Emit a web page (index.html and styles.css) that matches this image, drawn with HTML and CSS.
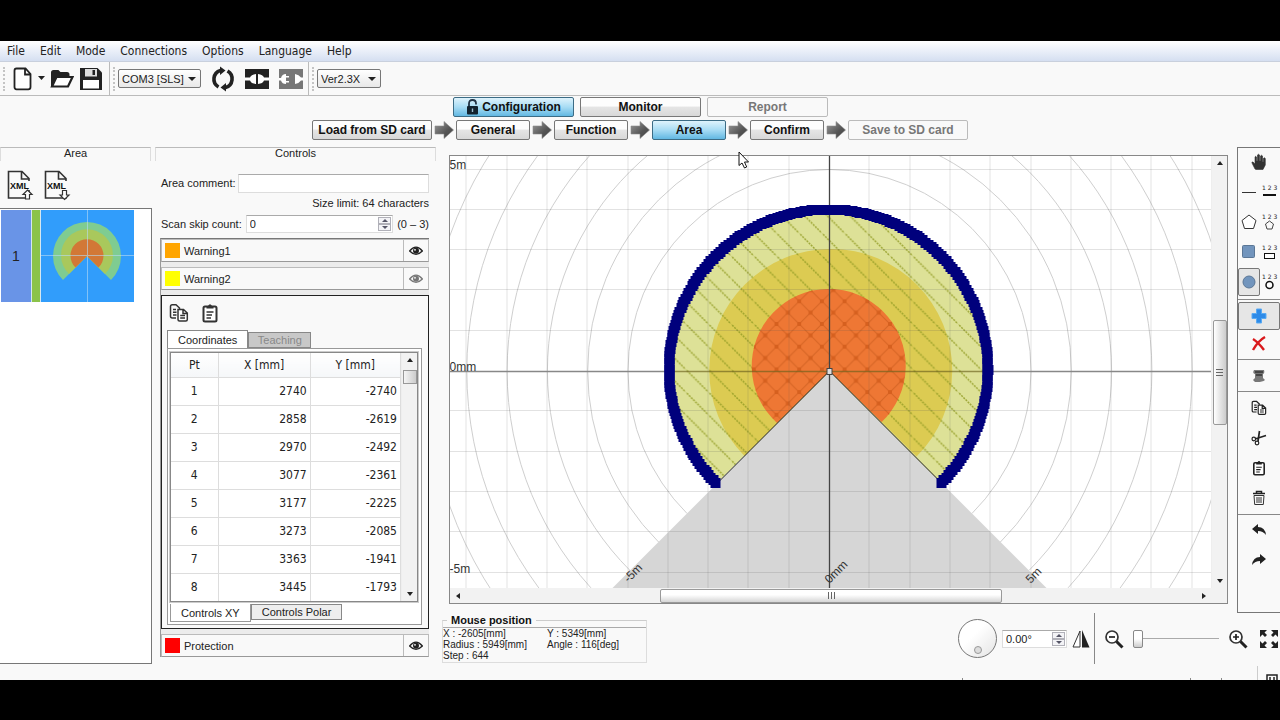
FILE: index.html
```html
<!DOCTYPE html>
<html lang="en">
<head>
<meta charset="utf-8">
<title>Area configuration</title>
<link rel="stylesheet" href="styles.css">
</head>
<body>
<svg class="defs" aria-hidden="true">
  <symbol id="eye" viewBox="0 0 14 10"><path d="M.6 5Q7-2.6 13.4 5 7 11.6.6 5Z" fill="none" stroke="currentColor" stroke-width="1.3"/><circle cx="7" cy="4.8" r="3" fill="currentColor"/><circle cx="6" cy="3.8" r=".9" fill="#fff"/></symbol>
  <symbol id="copy" viewBox="0 0 20 20"><path d="M7 15H3.2Q1.5 15 1.5 13.300V3.500Q1.500 1.800 3.200 1.800H7L10.500 5V6M4 6.500H7M4 9.200H7.500M4 12H7.500" fill="none" stroke="currentColor" stroke-width="1.500"/><path d="M9 6.500H14.500L18.300 10V16.500Q18.300 18 16.800 18H10.500Q9 18 9 16.500ZM14 7V10.500H18M11.200 12.500H16M11.200 15H16" fill="#fff" stroke="currentColor" stroke-width="1.500"/></symbol>
  <symbol id="clip" viewBox="0 0 20 20"><rect x="3.500" y="3.500" width="13" height="15" rx="1.500" fill="#fff" stroke="currentColor" stroke-width="2"/><path d="M6.500 5.500V3H8Q10-.5 12 3H13.500V5.500Z" fill="currentColor"/><path d="M6.500 9H13.500M6.500 12H12M6.500 15H11" stroke="currentColor" stroke-width="1.400"/></symbol>
  <symbol id="arrow" viewBox="0 0 20 18"><path d="M1 5H10V.5L19.500 9 10 17.500V13H1Z" fill="url(#arrowFill)" stroke="#8a8a8a" stroke-width=".6"/></symbol>
  <symbol id="file" viewBox="0 0 28 32"><path d="M1.500 1.500H15L22 8.500V28H1.500ZM14.500 2V9H22" fill="#fafafa" stroke="#333" stroke-width="1.600"/><rect x="3" y="11" width="20" height="9" fill="#fafafa"/></symbol>
  <linearGradient id="arrowFill" x1="0" y1="0" x2="1" y2="1"><stop offset="0" stop-color="#999"/><stop offset=".6" stop-color="#555"/><stop offset="1" stop-color="#444"/></linearGradient>
</svg>
<div class="letterbox top"></div>
<div class="app">
  <nav class="menu" aria-label="Main menu">
    <button>File</button><button>Edit</button><button>Mode</button><button>Connections</button><button>Options</button><button>Language</button><button>Help</button>
  </nav>
  <div class="toolbar">
    <div class="group files">
      <button aria-label="New"><svg width="20" height="24" viewBox="0 0 20 24"><path d="M3.500 1.500H12.500L17.500 7V20Q17.500 22.300 15.300 22.300H3.500Q1.500 22.300 1.500 20V3.700Q1.500 1.500 3.500 1.500ZM12 2V7.500H17" fill="#fff" stroke="#222" stroke-width="1.800"/></svg></button>
      <button class="more" aria-label="New options"><svg width="7" height="5"><path d="M0 0H7L3.500 4Z" fill="#222"/></svg></button>
      <button aria-label="Open"><svg width="24" height="20" viewBox="0 0 24 20"><path d="M2 18V3.500Q2 2 3.500 2H8L10 4H17Q18.500 4 18.500 5.500V8" fill="#222" stroke="#222" stroke-width="2"/><path d="M2 17.500 6.500 8H22.500L18 17.500Z" fill="#fff" stroke="#222" stroke-width="2.200"/></svg></button>
      <button aria-label="Save"><svg width="24" height="24" viewBox="0 0 24 24"><path d="M1 1H18.500L23 5.500V23H1Z" fill="#222"/><path d="M6 2H18V9.500H6Z" fill="#ddd"/><path d="M13.500 3H16V8H13.500Z" fill="#222"/><path d="M4 13H20V21.500H4Z" fill="#fff"/></svg></button>
    </div>
    <div class="group conn">
      <span class="select port"><select aria-label="Port"><option>COM3 [SLS]</option></select></span>
      <button aria-label="Refresh"><svg width="24" height="26" viewBox="0 0 24 26"><path d="M7.500 21A9 9 0 0 1 9.500 4.500M16.500 5A9 9 0 0 1 14.500 21.500" fill="none" stroke="#222" stroke-width="3.600"/><path d="M9 .5 14.500 4.500 9 9ZM15 17 9.500 21.500 15 25.500Z" fill="#222"/></svg></button>
      <button aria-label="Connect"><svg width="24" height="20" viewBox="0 0 24 20"><path d="M0 0H24V20H0Z" fill="#222"/><path d="M0 8.500H5Q6 5.500 11 5V15Q6 14.500 5 11.500H0ZM24 8.500H19Q18 5.500 13 5V15Q18 14.500 19 11.500H24Z" fill="#fff"/></svg></button>
      <button aria-label="Disconnect" disabled><svg width="24" height="20" viewBox="0 0 24 20"><path d="M0 0H24V20H0Z" fill="#777"/><path d="M0 9H2Q3 5 7 5V7H10V8.500H7V12H10V13.500H7V15Q3 15 2 11.500H0ZM24 8.500H22Q20 5.500 16 5V15Q20 14.500 22 11.500H24Z" fill="#fff"/></svg></button>
    </div>
    <div class="group">
      <span class="select ver"><select aria-label="Version"><option>Ver2.3X</option></select></span>
    </div>
  </div>

  <div class="modes">
    <button class="btn wide active"><svg width="13" height="16" viewBox="0 0 13 16"><path d="M3 8V4.500Q3 1 6.500 1T10 4.500V5.500" fill="none" stroke="#234" stroke-width="1.800"/><rect x="1" y="7" width="11" height="8.500" rx="1" fill="#12222e"/><path d="M6.500 9.500V13" stroke="#9bc" stroke-width="1.400"/></svg>Configuration</button>
    <button class="btn wide">Monitor</button>
    <button class="btn wide" disabled>Report</button>
  </div>
  <div class="steps">
    <button class="btn sd">Load from SD card</button><svg class="arrow"><use href="#arrow"/></svg>
    <button class="btn">General</button><svg class="arrow"><use href="#arrow"/></svg>
    <button class="btn">Function</button><svg class="arrow"><use href="#arrow"/></svg>
    <button class="btn active">Area</button><svg class="arrow"><use href="#arrow"/></svg>
    <button class="btn">Confirm</button><svg class="arrow"><use href="#arrow"/></svg>
    <button class="btn sd" disabled>Save to SD card</button>
  </div>

  <main class="work">
    <section class="areas">
      <h2>Area</h2>
      <div class="xml">
        <button aria-label="Export XML"><svg width="28" height="32" viewBox="0 0 28 32"><use href="#file"/><text x="3" y="19" class="xmltext">XML</text><path d="M20.500 20 25 24.500H22.500V29H18.500V24.500H16Z" fill="#fff" stroke="#333" stroke-width="1.200"/></svg></button>
        <button aria-label="Import XML"><svg width="28" height="32" viewBox="0 0 28 32"><use href="#file"/><text x="3" y="19" class="xmltext">XML</text><path d="M20.500 29.500 25 25H22.500V20.500H18.500V25H16Z" fill="#fff" stroke="#333" stroke-width="1.200"/></svg></button>
      </div>
      <div class="list">
        <div class="item">
          <span class="num">1</span><span class="flag"></span>
          <svg class="thumb" viewBox="0 0 93 92"><rect width="93" height="92" fill="#319dfb"/><path d="M46 46 22 70A34 34 0 1 1 70 70Z" fill="#7fcc91"/><path d="M46 46 28 64A26 26 0 1 1 64 64Z" fill="#a9c85c"/><path d="M46 46 34.500 57.500A16.500 16.500 0 1 1 57.500 57.500Z" fill="#d27836"/><path d="M46.500 0V92M0 45.500H93" stroke="#b9dcf5" stroke-width="1" opacity=".6"/></svg>
        </div>
      </div>
    </section>

    <section class="controls">
      <h2>Controls</h2>
      <div class="body">
        <div class="field comment"><label for="comment">Area comment:</label><input id="comment" type="text"></div>
        <p class="limit">Size limit: 64 characters</p>
        <div class="field"><label for="skip">Scan skip count:</label><span class="spin"><input id="skip" type="text" value="0"><span class="arrows"><button aria-label="Increase skip"></button><button class="down" aria-label="Decrease skip"></button></span></span><span class="range">(0 – 3)</span></div>
        <div class="zones">
          <div class="zone"><i class="swatch orange"></i><span>Warning1</span><button aria-label="Show Warning1"><svg width="14" height="10"><use href="#eye"/></svg></button></div>
          <div class="zone"><i class="swatch yellow"></i><span>Warning2</span><button class="dim" aria-label="Show Warning2"><svg width="14" height="10"><use href="#eye"/></svg></button></div>
          <div class="detail">
            <div class="edit"><button aria-label="Copy"><svg width="20" height="20"><use href="#copy"/></svg></button><button aria-label="Paste"><svg width="20" height="20"><use href="#clip"/></svg></button></div>
            <div class="tabs"><button class="on">Coordinates</button><button disabled>Teaching</button></div>
            <div class="pane">
              <div class="frame">
                <table>
                  <thead><tr><th class="pt">Pt</th><th>X [mm]</th><th>Y [mm]</th></tr></thead>
                  <tbody>
                    <tr><td>1</td><td>2740</td><td>-2740</td></tr>
                    <tr><td>2</td><td>2858</td><td>-2619</td></tr>
                    <tr><td>3</td><td>2970</td><td>-2492</td></tr>
                    <tr><td>4</td><td>3077</td><td>-2361</td></tr>
                    <tr><td>5</td><td>3177</td><td>-2225</td></tr>
                    <tr><td>6</td><td>3273</td><td>-2085</td></tr>
                    <tr><td>7</td><td>3363</td><td>-1941</td></tr>
                    <tr><td>8</td><td>3445</td><td>-1793</td></tr>
                  </tbody>
                </table>
                <div class="vscroll table-scroll"><b class="tri up"></b><span class="thumbbar"></span><b class="tri dn"></b></div>
              </div>
              <div class="tabs bottom"><button class="on">Controls XY</button><button>Controls Polar</button></div>
            </div>
          </div>
          <div class="zone"><i class="swatch red"></i><span>Protection</span><button aria-label="Show Protection"><svg width="14" height="10"><use href="#eye"/></svg></button></div>
        </div>
      </div>
    </section>

    <section class="stage">
      <div class="upper">
        <div class="canvas">
          <div class="view">
            <svg class="plot" viewBox="450 156 762 432" preserveAspectRatio="xMidYMid slice" role="img" aria-label="Scan area plot">
              <defs>
                <pattern id="hatch" x="777" y="324" width="22.700" height="22.700" patternUnits="userSpaceOnUse"><path d="M-1-1 23.700 23.700" stroke="#929c24" stroke-width="1.500" stroke-dasharray="2 1" opacity=".85"/></pattern>
                <pattern id="cross" x="777" y="324" width="22.700" height="22.700" patternUnits="userSpaceOnUse"><path d="M0 0 22.700 22.700M22.700 0 0 22.700" stroke="#cf5f20" stroke-width="1.200" opacity=".75"/><path d="M9.400 9.400H13.400V13.400H9.400ZM0 0H2V2H0ZM20.700 0H22.700V2H20.700ZM0 20.700H2V22.700H0ZM20.700 20.700H22.700V22.700H20.700Z" fill="#d6601f"/></pattern>
              </defs>
              <rect x="0" y="0" width="1700" height="900" fill="#fff"/>
              <g id="rings" fill="none" stroke="#cfcfcf"></g>
              <path d="M830 371 530 671H1130Z" fill="#d6d6d6"/>
              <path d="M829.500 371 717 483.500A159 159 0 1 1 942 483.500Z" fill="#dde197"/>
              <path d="M830.500 371 745 456A121.500 121.500 0 1 1 917 456.500Z" fill="#dccb52"/>
              <path d="M829.500 371 717 483.500A159 159 0 1 1 942 483.500Z" fill="url(#hatch)"/>
              <path d="M830 371 777.500 423A77 77 0 1 1 882 422Z" fill="#ee7734"/>
              <path d="M830 371 777.500 423A77 77 0 1 1 882 422Z" fill="url(#cross)"/>
              <g id="grid" stroke="#555" stroke-opacity=".17"></g>
              <path d="M0 371.500H668M992 371.500H1700" stroke="#888" stroke-width="1.500"/>
              <path d="M668 371.500H992" stroke="#6b611d" stroke-width="1.500" opacity=".65"/>
              <path d="M830 0V900" stroke="#444" stroke-width="1.300"/>
              <path d="M717 484 830 371 942 483" fill="none" stroke="#222"/>
              <g id="points" fill="#00007c"></g>
              <rect x="827.500" y="368.500" width="5" height="6" fill="#ddd" stroke="#444"/>
              <g class="scale"><text x="450" y="169">5m</text><text x="450" y="371">0mm</text><text x="450" y="573">-5m</text><text transform="translate(629 583) rotate(-45)">-5m</text><text transform="translate(830 584) rotate(-45)">0mm</text><text transform="translate(1031 584) rotate(-45)">5m</text></g>
            </svg>
            <div class="vscroll"><b class="tri up"></b><span class="grip"></span><b class="tri dn"></b></div>
          </div>
          <div class="hscroll"><b class="tri lt"></b><span class="grip"></span><b class="tri rt"></b></div>
        </div>
        <div class="tools">
          <div class="toolset draw">
            <button class="full" aria-label="Pan"><svg width="16" height="18" viewBox="0 0 16 18"><path d="M4 16 1 10Q.5 8.500 2 9L4 11V4Q4.500 2.500 5.500 4V8H6.500V2Q7.500.500 8.500 2V8H9.500V3Q10.500 1.500 11.500 3V9H12.300V5.500Q13.500 4 14.300 5.500V12L12 16.500H5Z" fill="#333" stroke="#333" stroke-width=".6"/></svg></button>
            <button aria-label="Line"><svg width="16" height="16"><path d="M1 8.500H15" stroke="#333"/></svg></button><button aria-label="Line by number"><svg width="18" height="16"><text x="1" y="6">1 2 3</text><path d="M2 11H15" stroke="#111" stroke-width="2"/></svg></button>
            <button aria-label="Polygon"><svg width="16" height="16"><path d="M8 1 15 6.500 12.500 14.500H3.500L1 6.500Z" fill="#fff" stroke="#333"/></svg></button><button aria-label="Polygon by number"><svg width="18" height="18"><text x="1" y="6">1 2 3</text><path d="M8.500 8 12.500 11 11 16H6L4.500 11Z" fill="none" stroke="#444"/></svg></button>
            <button aria-label="Rectangle"><svg width="16" height="16"><rect x="1.500" y="1.500" width="12" height="12" rx="1" fill="#7295bd" stroke="#5b7796"/></svg></button><button aria-label="Rectangle by number"><svg width="18" height="16"><text x="1" y="6">1 2 3</text><rect x="3.500" y="9.500" width="10" height="5" fill="#fff" stroke="#111"/></svg></button>
            <button class="pressed" aria-label="Circle"><svg width="16" height="16"><circle cx="8" cy="8" r="6" fill="#7295bd" stroke="#5b7796"/></svg></button><button aria-label="Circle by number"><svg width="18" height="18"><text x="1" y="6">1 2 3</text><circle cx="8.500" cy="12" r="3.500" fill="#fff" stroke="#111" stroke-width="1.500"/></svg></button>
          </div>
          <div class="toolset mode">
            <button class="pressed" aria-label="Add"><svg width="16" height="16"><path d="M5.500 1H10.500V5.500H15V10.500H10.500V15H5.500V10.500H1V5.500H5.500Z" fill="#2e8be8" stroke="#5aaaf2"/></svg></button>
            <button aria-label="Delete"><svg width="16" height="16"><path d="M2 3Q7 6 13 14M14 1Q7 5 2 14" fill="none" stroke="#d9191c" stroke-width="2.400"/></svg></button>
          </div>
          <div class="toolset single"><button aria-label="Reset"><svg width="14" height="14"><path d="M2 1H12Q13 4 11 5V9L13 11Q10 13.500 3 13L1 11 3 9V5Q0 4 2 1Z" fill="#777"/><path d="M3 3H11M4 6H10" stroke="#444" stroke-width="2"/></svg></button></div>
          <div class="toolset clipset">
            <button aria-label="Copy area"><svg width="16" height="16"><use href="#copy"/></svg></button>
            <button aria-label="Cut area"><svg width="16" height="16" viewBox="0 0 16 16"><path d="M8.500 1 7 11M15 5.500 4 9" stroke="#222" stroke-width="1.700"/><circle cx="6" cy="13" r="1.800" fill="none" stroke="#222" stroke-width="1.200"/><circle cx="2.800" cy="9" r="1.800" fill="none" stroke="#222" stroke-width="1.200"/></svg></button>
            <button aria-label="Paste area"><svg width="16" height="16"><use href="#clip"/></svg></button>
            <button aria-label="Delete area"><svg width="16" height="16"><path d="M2 3.500H14M5.500 3V1.500H10.500V3" fill="none" stroke="#222" stroke-width="1.500"/><path d="M3 5.500H13L12.300 14.500H3.700ZM6 7V13M8 7V13M10 7V13" fill="none" stroke="#333"/></svg></button>
          </div>
          <div class="toolset history">
            <button aria-label="Undo"><svg width="16" height="14"><path d="M1 6 7 1V4Q14 4 15 12 12 8 7 8V11Z" fill="#222"/></svg></button>
            <button aria-label="Redo"><svg width="16" height="14"><path d="M15 6 9 1V4Q2 4 1 12 4 8 9 8V11Z" fill="#222"/></svg></button>
          </div>
        </div>
      </div>
      <div class="lower">
        <fieldset class="mouse"><legend>Mouse position</legend>
          <div class="readout"><span>X : -2605[mm]</span><span>Y : 5349[mm]</span><span>Radius : 5949[mm]</span><span>Angle : 116[deg]</span><span>Step : 644</span></div>
        </fieldset>
        <div class="rotate">
          <button class="dial" aria-label="Rotation dial"><i></i></button>
          <span class="spin"><input type="text" value="0.00°" aria-label="Rotation angle"><span class="arrows"><button aria-label="Increase angle"></button><button class="down" aria-label="Decrease angle"></button></span></span>
          <button aria-label="Mirror"><svg width="18" height="18"><path d="M8 1V17H1Z" fill="#fff" stroke="#333"/><path d="M10 0V17.500H17.500Z" fill="#222"/></svg></button>
        </div>
        <div class="zoom">
          <button aria-label="Zoom out"><svg width="20" height="20"><circle cx="8" cy="8" r="6" fill="#fff" stroke="#333" stroke-width="1.700"/><path d="M5 8H11" stroke="#222" stroke-width="1.700"/><path d="M12.500 12.500 18.500 18.500" stroke="#222" stroke-width="3"/></svg></button>
          <input type="range" min="0" max="100" value="0" aria-label="Zoom">
          <button class="in" aria-label="Zoom in"><svg width="20" height="20"><circle cx="8" cy="8" r="6" fill="#fff" stroke="#333" stroke-width="1.700"/><path d="M5 8H11M8 5V11" stroke="#222" stroke-width="1.700"/><path d="M12.500 12.500 18.500 18.500" stroke="#222" stroke-width="3"/></svg></button>
          <button aria-label="Fit"><svg width="20" height="20"><path d="M1 1H8L5.500 3.500 8 6 6 8 3.500 5.500 1 8ZM19 1H12L14.500 3.500 12 6 14 8 16.500 5.500 19 8ZM1 19H8L5.500 16.500 8 14 6 12 3.500 14.500 1 12ZM19 19H12L14.500 16.500 12 14 14 12 16.500 14.500 19 12Z" fill="#222"/></svg></button>
        </div>
      </div>
    </section>
  </main>
  <footer class="status"><span></span><span></span><span></span><div class="corner"><svg width="12" height="6"><path d="M1 6V1H11V6M4 3V6M8 3V6" fill="none" stroke="#222" stroke-width="1.500"/></svg></div></footer>
  <svg class="pointer" width="12" height="18"><path d="M1 1V14.500L4 12 6.500 17 8.700 16 6.500 11H10.500Z" fill="#fff" stroke="#111"/></svg>
</div>
<div class="letterbox bottom"></div>
<script src="plot.js"></script>
</body>
</html>
```
FILE: plot.js
```js
const NS = 'http://www.w3.org/2000/svg';
const CX = 830, CY = 371, STEP = 40.3;

function add(parentId, tag, attrs) {
  const el = document.createElementNS(NS, tag);
  for (const key in attrs) el.setAttribute(key, attrs[key]);
  document.getElementById(parentId).appendChild(el);
}

for (let i = 1; i <= 18; i++) {
  add('rings', 'circle', { cx: CX, cy: CY, r: i * STEP });
}
for (let i = -18; i <= 18; i++) {
  if (i === 0) continue;
  const x = Math.round(CX + i * STEP) - 0.5;
  const y = Math.round(CY + i * STEP) - 0.5;
  add('grid', 'path', { d: `M${x} 0V900M0 ${y}H1700` });
}
/* Boundary handles along the 270 degree arc */
for (let a = -45; a <= 225; a += 1.25) {
  const t = a * Math.PI / 180;
  const x = Math.round(829 + 159.5 * Math.cos(t)) - 5;
  const y = Math.round(369.5 - 160 * Math.sin(t)) - 5;
  add('points', 'rect', { x: x, y: y, width: 10, height: 10 });
}
```
FILE: styles.css
```css
* { box-sizing: border-box; }
body { margin: 0; min-height: 100vh; display: flex; flex-direction: column; overflow: hidden; background: #000; color: #222; font: 11px/14px "Liberation Sans", Arial, sans-serif; }
button { margin: 0; padding: 0; border: 0; background: none; font: inherit; color: inherit; display: inline-flex; align-items: center; justify-content: center; }
input, select { font: inherit; color: inherit; border-radius: 0; }
svg { display: block; flex: none; }
h2, p { margin: 0; font-weight: normal; font-size: 11px; }
.defs { position: absolute; width: 0; height: 0; }
.letterbox { background: #000; flex: none; }
.top { height: 41px; }
.bottom { height: 40px; }
.app { position: relative; flex: 1; display: flex; flex-direction: column; background: #f9f9f9; }

.menu { display: flex; gap: 15px; height: 21px; padding: 0 7px; background: linear-gradient(#fff, #eef2fa 40%, #d5dff1); border-bottom: 1px solid #c9d0dd; font: 12px/20px "DejaVu Sans Condensed", "Noto Sans", sans-serif; }
.toolbar { display: flex; height: 34px; border-bottom: 1px solid #bbb; }
.group { display: flex; align-items: center; gap: 10px; padding: 0 5px; border-right: 1px solid #bbb; }
.group:last-child { border: 0; }
.group::before { content: ""; height: 24px; border-left: 2px dotted #c4c4c4; margin-left: -2px; }
.files { gap: 5px; width: 110px; }
.files::before { margin-right: 3px; }
.conn { width: 199px; }
.conn::before, .group:last-child::before { margin-right: -7px; }
.select { position: relative; display: inline-block; }
.select select { appearance: none; width: 100%; height: 19px; padding: 0 3px; border: 1px solid #777; border-radius: 2px; background: linear-gradient(#fff, #e8e8e8); }
.select::after { content: ""; position: absolute; right: 5px; top: 8px; border: 4px solid transparent; border-top-color: #222; border-bottom: 0; }
.port { width: 84px; }
.ver { width: 64px; }

.btn { height: 20px; width: 74px; border: 1px solid #777; border-radius: 2px; background: linear-gradient(#fdfdfd 45%, #e5e5e5 50%, #d8d8d8); font-weight: bold; font-size: 12px; color: #111; white-space: nowrap; }
.btn.active { background: linear-gradient(#dff3fc, #a8dcf4 50%, #62b8e2); border-color: #3c6c85; }
.btn:disabled { background: #f9f9f9; border-color: #bbb; color: #777; }
.btn.wide { width: 121px; gap: 3px; }
.btn.sd { width: 120px; }
.modes { display: flex; justify-content: center; gap: 6px; padding-top: 1px; margin-left: 1px; }
.steps { display: flex; justify-content: center; align-items: center; padding-top: 3px; }
.steps .arrow { width: 20px; height: 18px; margin: 0 2px; }

.work { flex: 1; display: flex; padding-top: 7px; }
h2 { height: 14px; border: 1px solid #ddd; border-top-color: #bbb; border-bottom: 0; text-align: center; line-height: 11px; }
.areas { width: 152px; display: flex; flex-direction: column; flex: none; }
.areas h2 { margin-right: 1px; }
.xml { display: flex; gap: 9px; padding: 9px 7px 6px; }
.xmltext { font: bold 9px "Liberation Sans", sans-serif; fill: #111; }
.list { flex: 1; background: #fff; border: 1px solid #777; border-left: 0; padding: 1px; }
.item { display: flex; height: 92px; }
.num { width: 30px; background: #6994e7; display: flex; align-items: center; justify-content: center; font-size: 14px; }
.flag { width: 10px; background: #8bc34a; border: 1px solid #d5e7f0; border-width: 0 1px; }
.thumb { width: 93px; height: 92px; }

.controls { width: 284px; flex: none; padding-left: 3px; display: flex; flex-direction: column; }
.body { padding: 12px 7px 0 5px; }
.field { display: flex; align-items: center; gap: 4px; height: 20px; margin-left: 1px; }
.comment { gap: 2px; }
.comment input { flex: 1; min-width: 0; height: 19px; border: 1px solid #ddd; border-top-color: #aaa; background: #fff; }
.limit { text-align: right; height: 21px; line-height: 21px; }
.spin { display: flex; flex: 1; min-width: 0; height: 18px; padding: 1px; border: 1px solid #ddd; border-top-color: #aaa; background: #fff; }
.spin input { flex: 1; min-width: 0; width: 20px; border: 0; padding: 0 2px; background: none; }
.arrows { display: flex; flex-direction: column; width: 13px; }
.arrows button { flex: 1; border: 1px solid #b0b0b8; background: #f3f3f6; }
.arrows button::after { content: ""; border: 3px solid transparent; border-bottom-color: #556; border-top: 0; }
.arrows .down::after { border-top: 3px solid #556; border-bottom: 0; }
.zones { margin-top: 4px; border-left: 1px solid #999; border-top: 1px solid #777; background: #ececec; display: flex; flex-direction: column; gap: 5px; }
.zone { display: flex; align-items: center; height: 23px; background: #f9f9f9; border: 1px solid #bbb; border-bottom-color: #999; }
.zone span { flex: 1; padding-left: 4px; }
.zone button { width: 25px; align-self: stretch; border-left: 1px solid #bbb; }
.dim { color: #777; }
.swatch { width: 15px; height: 15px; margin-left: 3px; }
.orange { background: #ffa500; }
.yellow { background: #ff0; }
.red { background: #f00; }
.detail { border: 1px solid #222; background: #f9f9f9; padding: 7px 6px 3px 5px; }
.edit { display: flex; gap: 11px; padding: 0 2px; color: #333; }
.tabs { display: flex; align-items: flex-end; height: 18px; }
.tabs button { height: 16px; padding: 0 10px; border: 1px solid #888; background: #eee; white-space: nowrap; }
.tabs button:disabled { background: #c8c8c8; color: #888; }
.tabs .on { height: 18px; background: #fff; border-bottom: 0; }
.edit + .tabs { margin-top: 7px; }
.edit + .tabs .on + button { width: 63px; }
.pane { border: 1px solid #999; padding: 3px 3px 2px 2px; background: #fff; }
.frame { display: flex; border: 1px solid #888; outline: 1px solid #ccc; }
table { flex: 1; border-collapse: collapse; table-layout: fixed; font: 12px/16px "DejaVu Sans Condensed", "Noto Sans", sans-serif; }
th { font-weight: normal; height: 24px; padding: 0; border: 1px solid #ddd; border-width: 0 1px 1px 0; background: linear-gradient(#fff, #f5f7f9); }
.pt { width: 47px; }
td { height: 28px; padding: 0 3px; text-align: right; border: 1px solid #ddd; border-width: 0 1px 1px 0; }
td:first-child { text-align: center; }
tr:last-child td { border-bottom: 0; }
.tabs.bottom { height: 18px; align-items: flex-start; margin-top: 2px; background: none; }
.bottom .on { height: 18px; border: 1px solid #999; border-top: 0; }

.vscroll { width: 16px; display: flex; flex-direction: column; align-items: center; justify-content: space-between; background: #f2f2f2; border-left: 1px solid #eee; padding: 5px 0; }
.tri { border: 3px solid transparent; }
.tri.up { border-bottom: 4px solid #222; border-top: 0; }
.tri.dn { border-top: 4px solid #222; border-bottom: 0; }
.tri.lt { border-right: 4px solid #222; border-left: 0; }
.tri.rt { border-left: 4px solid #222; border-right: 0; }
.thumbbar { width: 14px; height: 14px; margin: 8px 0 auto; border: 1px solid #999; background: linear-gradient(90deg, #f5f5f5, #ccc); }
.grip { border: 1px solid #999; border-radius: 2px; display: flex; align-items: center; justify-content: center; }
.grip::after { content: ""; width: 7px; height: 7px; background: repeating-linear-gradient(90deg, #666 0 1px, transparent 1px 3px); }

.stage { flex: 1; min-width: 0; display: flex; flex-direction: column; padding-left: 6px; }
.upper { flex: 1; display: flex; align-items: stretch; gap: 9px; padding-left: 7px; }
.canvas { flex: 1; min-width: 0; margin: 8px 0 9px; border: 1px solid #888; display: flex; flex-direction: column; }
.view { flex: 1; display: flex; min-height: 0; }
.plot { flex: 1 1 0; min-width: 0; height: 432px; }
.view .grip { width: 14px; height: 105px; margin: 155px 0 auto; background: linear-gradient(90deg, #fff, #ccc); }
.view .grip::after { background: repeating-linear-gradient(#666 0 1px, transparent 1px 3px); }
.hscroll { height: 15px; padding: 0 21px 0 6px; display: flex; align-items: center; justify-content: space-between; background: #f2f2f2; }
.hscroll .grip { width: 342px; height: 14px; background: linear-gradient(#fff 40%, #d6d6d6); }
.scale { font: 12px "Liberation Sans", sans-serif; fill: #333; }

.tools { width: 43px; border: 1px solid #777; border-right: 0; flex: none; overflow: hidden; }
.toolset { width: 42px; display: grid; border-bottom: 1px solid #888; justify-items: center; }
.toolset:last-child { border: 0; }
.draw { grid-template-columns: 22px 20px; grid-auto-rows: 30px; padding-bottom: 1px; }
.draw button { width: 22px; height: 28px; }
.draw .full { grid-column: 1 / 3; width: 42px; }
.draw text { font: 6px "DejaVu Sans", sans-serif; fill: #222; }
.toolset .pressed { border: 1px solid #777; border-radius: 2px; background: #e6e6e6; }
.mode { grid-auto-rows: 28px; padding: 2px 0 1px; }
.mode button { width: 42px; height: 28px; }
.single { height: 32px; }
.clipset { grid-auto-rows: 30px; padding: 1px 0; }
.history { grid-auto-rows: 30px; }

.lower { display: flex; height: 51px; }
.mouse { margin: 0; padding: 0; border: 1px solid #ddd; border-top-color: #ccc; width: 205px; height: 50px; min-width: 0; }
.mouse legend { margin-left: 4px; padding: 0 4px; font-weight: bold; font-size: 11px; line-height: 14px; color: #111; }
.readout { display: grid; grid-template-columns: 104px auto; line-height: 11px; font-size: 10px; border-top: 1px solid #aaa; white-space: nowrap; }
.rotate { display: flex; align-items: center; gap: 5px; margin-left: auto; padding-right: 4px; border-right: 1px solid #888; height: 51px; }
.dial { width: 39px; height: 39px; border: 1px solid #777; border-radius: 50%; background: linear-gradient(135deg, #fff 40%, #e4e4e4); align-items: flex-end; padding-bottom: 3px; }
.dial i { width: 8px; height: 8px; border: 1px solid #999; border-radius: 50%; background: #ddd; }
.rotate .spin { flex: none; width: 65px; }
.zoom { display: flex; align-items: center; height: 51px; padding-left: 9px; width: 185px; overflow: hidden; }
.zoom .in { margin: 0 11px 0 9px; }
input[type=range] { appearance: none; width: 86px; margin: 0 0 0 9px; height: 18px; background: linear-gradient(#aaa, #aaa) center / 100% 1px no-repeat; }
input[type=range]::-webkit-slider-thumb { appearance: none; width: 10px; height: 18px; border: 1px solid #888; border-radius: 2px; background: linear-gradient(#fff 50%, #ccc); }
.status { height: 16px; display: flex; justify-content: flex-end; align-items: flex-end; }
.status span { width: 1px; height: 2px; background: #888; margin-right: 30px; }
.status span:first-child { margin-right: 227px; }
.status span:nth-child(3) { margin-right: 35px; }
.corner { width: 23px; height: 14px; border-left: 1px solid #ccc; padding: 8px 0 0 8px; overflow: hidden; }
.pointer { position: absolute; left: 738px; top: 110px; }
```
